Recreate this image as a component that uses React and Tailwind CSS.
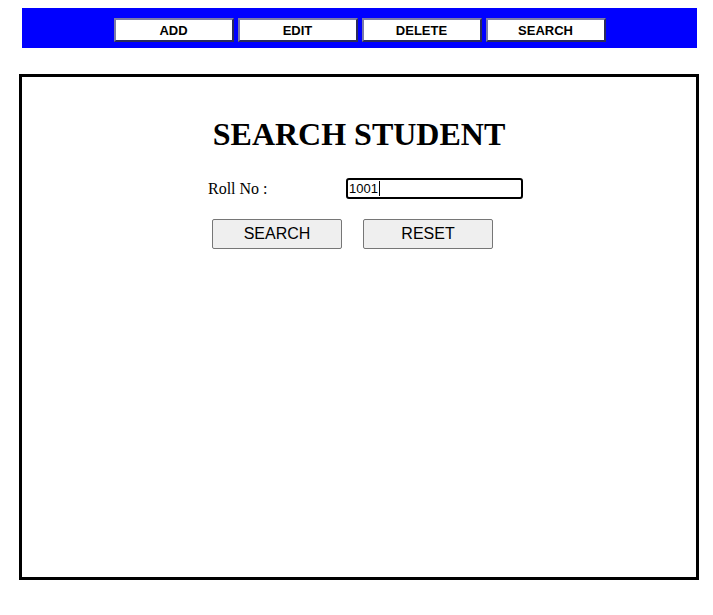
export default function App() {
  const navs = ["ADD", "EDIT", "DELETE", "SEARCH"];
  return (
    <div className="w-[713px] h-[615px] bg-white">
      <div className="pt-[8px] pl-[22px]">
        <div className="w-[675px] h-[40px] bg-[#0000ff] flex justify-center items-start pt-[10px] gap-[4px]">
          {navs.map((n) => (
            <button
              key={n}
              className="w-[120px] h-[24px] bg-white border-2 border-t-[#7b7ba8] border-l-[#7b7ba8] border-b-[#2c2c5a] border-r-[#2c2c5a] text-[13px] font-bold text-black flex items-center justify-center leading-none"
              style={{ fontFamily: '"Liberation Sans", Arial, sans-serif' }}
            >
              {n}
            </button>
          ))}
        </div>
      </div>
      <div className="mt-[26px] ml-[19px] w-[680px] h-[506px] border-[3px] border-black">
        <h1
          className="mt-[39px] text-center text-[32px] leading-[36px] font-bold text-black"
          style={{ fontFamily: '"Liberation Serif", "Times New Roman", serif' }}
        >
          SEARCH STUDENT
        </h1>
        <div className="mt-[26px] flex justify-center items-center pl-[13px]">
          <label
            className="w-[138px] text-[16px] leading-[18px] text-black"
            style={{ fontFamily: '"Liberation Serif", "Times New Roman", serif' }}
          >
            Roll No :
          </label>
          <div
            className="w-[177px] h-[21px] border-2 border-black rounded-[3px] px-[1px] flex items-center text-[13px] text-black"
            style={{ fontFamily: '"Liberation Sans", Arial, sans-serif' }}
          >
            <span>1001</span>
            <span className="w-[1px] h-[15px] bg-black ml-[1px]"></span>
          </div>
        </div>
        <div className="mt-[20px] flex justify-center gap-[21px] pr-[13px]">
          {["SEARCH", "RESET"].map((b) => (
            <button
              key={b}
              className="w-[130px] h-[30px] bg-[#efefef] border border-[#767676] rounded-[2px] text-[16px] text-black flex items-center justify-center"
              style={{ fontFamily: '"Liberation Sans", Arial, sans-serif' }}
            >
              {b}
            </button>
          ))}
        </div>
      </div>
    </div>
  );
}
